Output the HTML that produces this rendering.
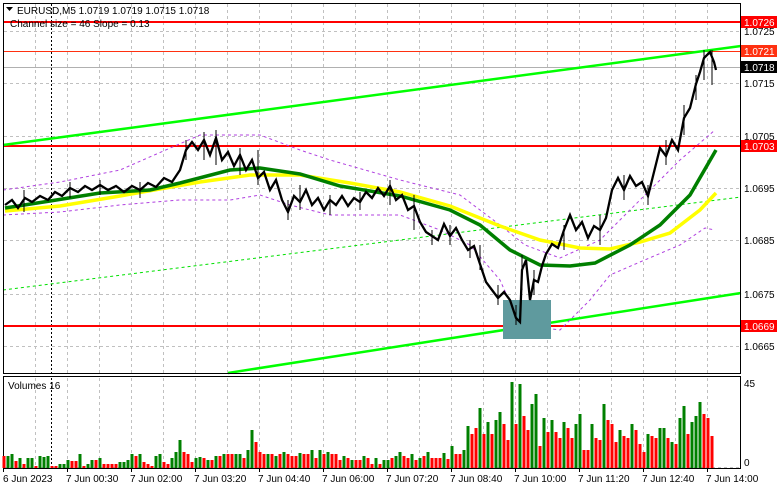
<!DOCTYPE html>
<html><head><meta charset="utf-8"><style>
body{margin:0;background:#fff;width:781px;height:489px;overflow:hidden;font-family:"Liberation Sans",sans-serif}
svg{position:absolute;left:0;top:0}
text{font-family:"Liberation Sans",sans-serif;font-size:10px;fill:#000}
</style></head><body>
<svg width="781" height="489" viewBox="0 0 781 489">
<rect width="781" height="489" fill="#fff"/>
<g stroke="#c0c0c0" stroke-dasharray="3,3" stroke-width="1">
<path d="M35.5 4V373M67.5 4V373M99.5 4V373M131.5 4V373M163.5 4V373M195.5 4V373M227.5 4V373M259.5 4V373M291.5 4V373M323.5 4V373M355.5 4V373M387.5 4V373M419.5 4V373M451.5 4V373M483.5 4V373M515.5 4V373M547.5 4V373M579.5 4V373M611.5 4V373M643.5 4V373M675.5 4V373M707.5 4V373"/>
<path d="M35.5 378V467M67.5 378V467M99.5 378V467M131.5 378V467M163.5 378V467M195.5 378V467M227.5 378V467M259.5 378V467M291.5 378V467M323.5 378V467M355.5 378V467M387.5 378V467M419.5 378V467M451.5 378V467M483.5 378V467M515.5 378V467M547.5 378V467M579.5 378V467M611.5 378V467M643.5 378V467M675.5 378V467M707.5 378V467"/>
<path d="M4 31.5H740M4 83.5H740M4 136.5H740M4 188.5H740M4 240.5H740M4 294.5H740M4 346.5H740M4 467.5H740"/>
</g>
<path d="M51.5 4V373M51.5 378V467" stroke="#000" stroke-dasharray="2,2"/>
<path d="M4 67.5H740" stroke="#b0b0b0"/>
<path d="M4 51.5H740" stroke="#ff3010" stroke-width="1"/>
<path d="M4 22H740M4 146H740M4 326H740" stroke="#ff0000" stroke-width="2"/>
<path d="M3 290L741 197" stroke="#00e000" stroke-dasharray="3,3"/>
<path d="M3 145L741 46M228 373L741 293" stroke="#00ff00" stroke-width="2.5"/>
<g fill="none" stroke="#b040e0" stroke-dasharray="3,3">
<polyline points="3,190 60,182 120,170 200,135 260,135 300,150 330,160 400,180 460,195 500,225 525,245 560,258 600,240 640,200 680,160 715,130"/>
<polyline points="3,215 60,212 120,205 180,200 230,200 260,195 290,205 330,215 400,215 440,230 470,245 500,280 520,325 560,330 590,300 610,275 640,262 680,245 705,228 715,230"/>
</g>
<rect x="503" y="300" width="48" height="39" fill="#5f9a9e"/>
<polyline fill="none" stroke="#ffff00" stroke-width="3.5" points="5,211 60,206 120,196 200,182 250,175 300,175 350,183 400,192 450,206 500,226 540,240 580,248 610,249 640,242 670,233 700,210 716,193"/>
<polyline fill="none" stroke="#007f00" stroke-width="3.5" points="5,208 50,201 100,193 150,190 180,183 230,170 260,168 300,174 340,186 400,196 450,210 480,225 510,250 540,265 570,266 595,263 630,245 660,225 690,195 716,150"/>
<polyline fill="none" stroke="#000" stroke-width="2.3" points="5,205 12,200 18,208 25,198 32,202 40,196 48,200 55,192 62,196 70,188 78,192 85,186 92,190 100,185 108,190 116,186 124,192 132,186 140,190 148,183 156,187 164,178 172,182 180,170 186,150 192,142 198,150 204,140 210,155 216,138 222,160 228,152 234,166 240,155 246,170 252,160 258,178 264,172 270,190 276,180 282,200 288,212 294,196 300,202 306,190 312,205 318,198 324,210 330,200 336,205 342,196 348,206 354,198 360,202 366,192 372,198 378,188 384,196 390,186 396,200 402,195 408,210 414,206 420,222 426,232 432,236 438,240 444,224 450,236 456,228 462,240 468,250 474,246 480,264 486,282 492,290 498,298 504,292 510,300 516,318 520,322 522,270 526,260 530,300 534,280 538,282 542,266 546,254 552,244 558,248 564,230 570,215 576,230 582,222 588,238 594,226 600,230 606,218 612,190 618,178 624,190 630,176 636,186 642,182 648,196 654,172 660,148 666,156 672,140 678,150 684,118 690,108 696,84 700,72 704,58 710,52 714,62 716,70"/>
<g stroke="#000" stroke-width="1">
<path d="M186 140V160M204 132V160M216 130V165M258 150V185M288 200V220M330 195V215M414 195V230M432 230V245M480 245V270M498 285V305M516 305V325M522 255V290M534 270V295M564 225V250M600 215V245M624 175V200M648 185V205M666 140V165M684 105V135M696 75V100M704 50V80M712 50V85M24 190V212M70 182V198M100 180V195M140 182V198M240 148V175M300 185V210M360 192V210M390 180V205M450 225V245M470 240V258"/>
</g>
<rect x="3.5" y="3.5" width="737" height="370" fill="none" stroke="#000"/>
<rect x="3.5" y="376.5" width="737" height="92" fill="none" stroke="#000"/>
<g stroke-width="3">
<path stroke="#008000" d="M8 468v-12M12 468v-14M20 468v-10M28 468v-10M32 468v-10M40 468v-12M44 468v-11M48 468v-12M60 468v-4M64 468v-4M68 468v-8M80 468v-14M88 468v-4M92 468v-8M100 468v-10M120 468v-6M124 468v-6M128 468v-8M132 468v-14M140 468v-14M156 468v-12M160 468v-14M172 468v-10M176 468v-16M180 468v-28M196 468v-10M200 468v-11M208 468v-8M216 468v-12M224 468v-14M236 468v-14M240 468v-14M248 468v-18M252 468v-38M268 468v-14M276 468v-12M284 468v-16M300 468v-15M312 468v-18M320 468v-18M328 468v-16M344 468v-12M352 468v-8M364 468v-12M376 468v-10M384 468v-8M388 468v-8M396 468v-12M400 468v-16M412 468v-14M420 468v-10M428 468v-16M444 468v-15M452 468v-22M464 468v-18M468 468v-42M480 468v-60M488 468v-46M496 468v-48M500 468v-56M512 468v-86M520 468v-84M532 468v-64M536 468v-74M544 468v-50M552 468v-48M564 468v-46M576 468v-44M580 468v-54M592 468v-44M604 468v-64M620 468v-38M632 468v-44M648 468v-34M660 468v-40M664 468v-40M672 468v-26M680 468v-50M684 468v-62M692 468v-46M696 468v-52M700 468v-66"/>
<path stroke="#ff0000" d="M4 468v-12M16 468v-7M24 468v-4M36 468v-2M52 468v-2M56 468v-2M72 468v-7M76 468v-7M84 468v-2M96 468v-8M104 468v-4M108 468v-4M112 468v-4M116 468v-4M136 468v-12M144 468v-6M148 468v-4M152 468v-2M164 468v-6M168 468v-4M184 468v-16M188 468v-14M192 468v-6M204 468v-10M212 468v-8M220 468v-12M228 468v-14M232 468v-14M244 468v-10M256 468v-26M260 468v-16M264 468v-14M272 468v-14M280 468v-14M288 468v-14M292 468v-12M296 468v-12M304 468v-14M308 468v-14M316 468v-10M324 468v-14M332 468v-14M336 468v-14M340 468v-8M348 468v-10M356 468v-8M360 468v-8M368 468v-10M372 468v-4M380 468v-4M392 468v-10M404 468v-12M408 468v-10M416 468v-8M424 468v-12M432 468v-10M436 468v-10M440 468v-10M448 468v-9M456 468v-14M460 468v-14M472 468v-34M476 468v-40M484 468v-34M492 468v-34M504 468v-44M508 468v-28M516 468v-44M524 468v-52M528 468v-38M540 468v-22M548 468v-36M556 468v-36M560 468v-30M568 468v-40M572 468v-30M584 468v-18M588 468v-18M596 468v-30M600 468v-28M608 468v-48M612 468v-44M616 468v-26M624 468v-32M628 468v-30M636 468v-38M640 468v-24M644 468v-16M652 468v-32M656 468v-30M668 468v-30M676 468v-24M688 468v-34M704 468v-54M708 468v-50M712 468v-32"/>
</g>
<g>
<text x="744" y="35">1.0725</text>
<text x="744" y="87">1.0715</text>
<text x="744" y="140">1.0705</text>
<text x="744" y="192">1.0695</text>
<text x="744" y="244">1.0685</text>
<text x="744" y="298">1.0675</text>
<text x="744" y="350">1.0665</text>
<text x="744" y="387">45</text>
<text x="744" y="466">0</text>
</g>
<rect x="741" y="16" width="36" height="12" fill="#ff0000"/><text x="744" y="26" style="fill:#fff">1.0726</text>
<rect x="741" y="45" width="36" height="12" fill="#ff3010"/><text x="744" y="55" style="fill:#fff">1.0721</text>
<rect x="741" y="61" width="36" height="12" fill="#000"/><text x="744" y="71" style="fill:#fff">1.0718</text>
<rect x="741" y="140" width="36" height="12" fill="#ff0000"/><text x="744" y="150" style="fill:#fff">1.0703</text>
<rect x="741" y="320" width="36" height="12" fill="#ff0000"/><text x="744" y="330" style="fill:#fff">1.0669</text>
<path d="M6 7h7l-3.5 4z" fill="#000"/>
<text x="17" y="14">EURUSD,M5  1.0719 1.0719 1.0715 1.0718</text>
<text x="10" y="27">Channel size = 46 Slope = 0.13</text>
<text x="8" y="389">Volumes 16</text>
<g stroke="#000"><path d="M3.5 468V472M67.5 468V472M131.5 468V472M195.5 468V472M259.5 468V472M323.5 468V472M387.5 468V472M451.5 468V472M515.5 468V472M579.5 468V472M643.5 468V472M707.5 468V472"/></g>
<text x="3" y="482">6 Jun 2023</text>
<text x="66" y="482">7 Jun 00:30</text>
<text x="130" y="482">7 Jun 02:00</text>
<text x="194" y="482">7 Jun 03:20</text>
<text x="258" y="482">7 Jun 04:40</text>
<text x="322" y="482">7 Jun 06:00</text>
<text x="386" y="482">7 Jun 07:20</text>
<text x="450" y="482">7 Jun 08:40</text>
<text x="514" y="482">7 Jun 10:00</text>
<text x="578" y="482">7 Jun 11:20</text>
<text x="642" y="482">7 Jun 12:40</text>
<text x="706" y="482">7 Jun 14:00</text>
</svg>
</body></html>
